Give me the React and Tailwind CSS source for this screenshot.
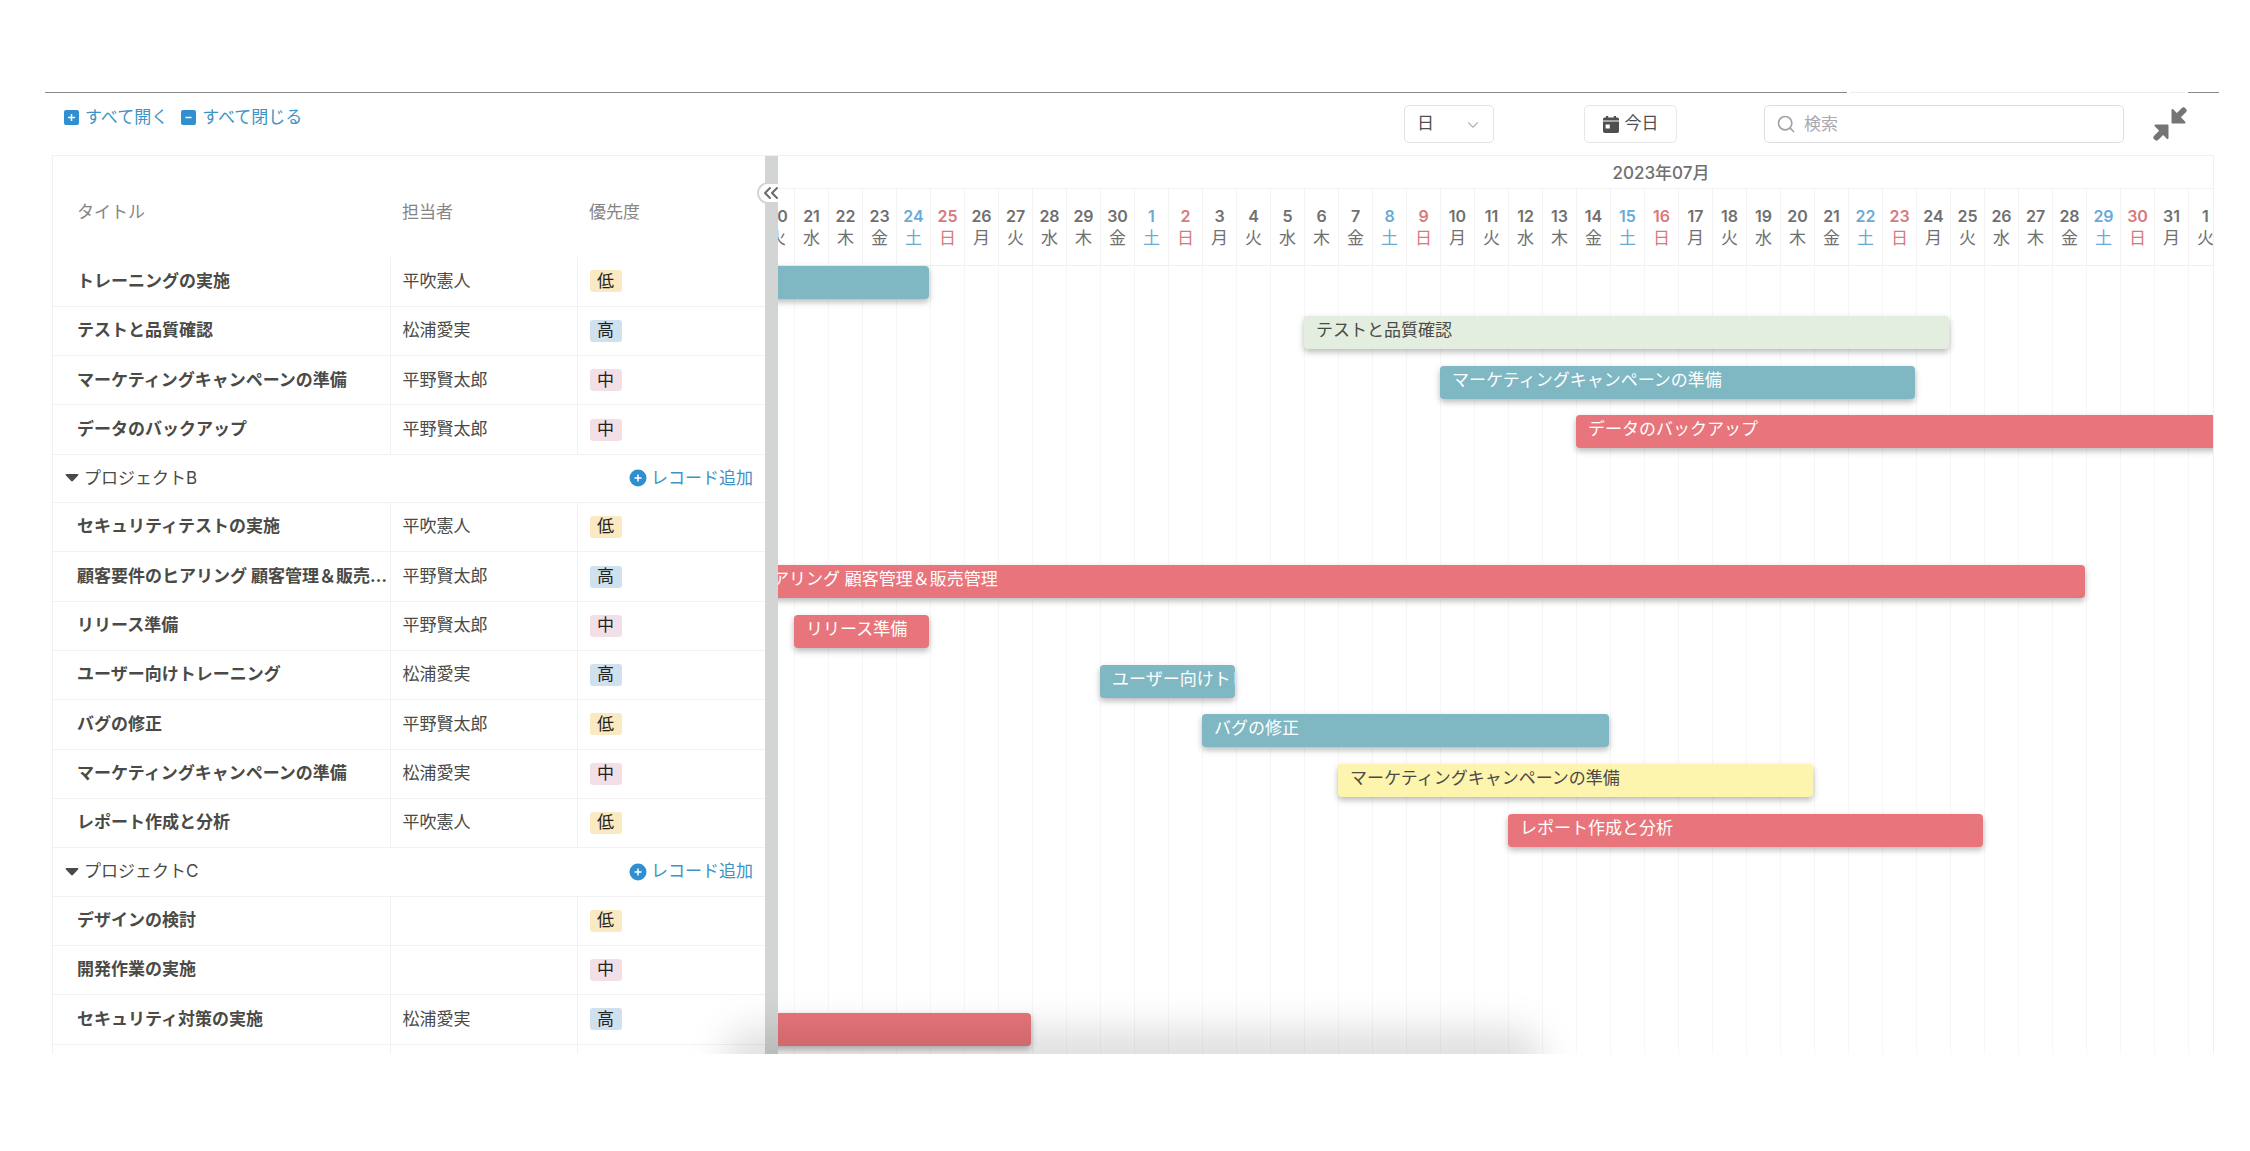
import { useState } from "react";
import { ChevronDown, ChevronsLeft, Search } from "lucide-react";

const rows = [
  { title: "トレーニングの実施", owner: "平吹憲人", priority: "低" },
  { title: "テストと品質確認", owner: "松浦愛実", priority: "高" },
  { title: "マーケティングキャンペーンの準備", owner: "平野賢太郎", priority: "中" },
  { title: "データのバックアップ", owner: "平野賢太郎", priority: "中" },
  { group: "プロジェクトB" },
  { title: "セキュリティテストの実施", owner: "平吹憲人", priority: "低" },
  { title: "顧客要件のヒアリング 顧客管理＆販売管理", owner: "平野賢太郎", priority: "高" },
  { title: "リリース準備", owner: "平野賢太郎", priority: "中" },
  { title: "ユーザー向けトレーニング", owner: "松浦愛実", priority: "高" },
  { title: "バグの修正", owner: "平野賢太郎", priority: "低" },
  { title: "マーケティングキャンペーンの準備", owner: "松浦愛実", priority: "中" },
  { title: "レポート作成と分析", owner: "平吹憲人", priority: "低" },
  { group: "プロジェクトC" },
  { title: "デザインの検討", owner: "", priority: "低" },
  { title: "開発作業の実施", owner: "", priority: "中" },
  { title: "セキュリティ対策の実施", owner: "松浦愛実", priority: "高" },
  { title: "", owner: "", priority: "" },
];

const badgeColors = {
  低: "bg-[#fbe9c2]",
  高: "bg-[#cfe1ee]",
  中: "bg-[#f3dfe8]",
};

const barColors = {
  teal: "bg-[#7fb7c3] text-white",
  red: "bg-[#e8757b] text-white",
  green: "bg-[#e3eee1] text-[#4a4a46]",
  yellow: "bg-[#fdf4ae] text-[#4a4a46]",
};

// start / end are day numbers counted from 6/17 (= 1), end is inclusive
const bars = [
  { row: 1, start: 1, end: 8, color: "teal", label: "" },
  { row: 2, start: 20, end: 38, color: "green", label: "テストと品質確認" },
  { row: 3, start: 24, end: 37, color: "teal", label: "マーケティングキャンペーンの準備" },
  { row: 4, start: 28, end: 46, color: "red", label: "データのバックアップ" },
  { row: 7, start: 1, end: 42, color: "red", label: "顧客要件のヒアリング 顧客管理＆販売管理" },
  { row: 8, start: 5, end: 8, color: "red", label: "リリース準備" },
  { row: 9, start: 14, end: 17, color: "teal", label: "ユーザー向けトレーニング" },
  { row: 10, start: 17, end: 28, color: "teal", label: "バグの修正" },
  { row: 11, start: 21, end: 34, color: "yellow", label: "マーケティングキャンペーンの準備" },
  { row: 12, start: 26, end: 39, color: "red", label: "レポート作成と分析" },
  { row: 16, start: 1, end: 11, color: "red", label: "" },
];

const weekdays = ["日", "月", "火", "水", "木", "金", "土"];

const days = Array.from({ length: 46 }, (_, i) => {
  const date = new Date(2023, 5, 17 + i);
  return { day: date.getDate(), weekday: date.getDay() };
});

function dayColor(weekday) {
  if (weekday === 6) return "text-[#6aabd6]";
  if (weekday === 0) return "text-[#d9797c]";
  return "text-[#707070]";
}

function CalendarIcon() {
  return (
    <svg width="16" height="17" viewBox="0 0 16 17" fill="currentColor" aria-hidden="true">
      <path d="M3 0h2.2v1.6h5.6V0H13v1.6h1.4A1.6 1.6 0 0 1 16 3.2v1.3H0V3.2a1.6 1.6 0 0 1 1.6-1.6H3z" />
      <path
        fillRule="evenodd"
        d="M0 5.6h16v9.6a1.8 1.8 0 0 1-1.8 1.8H1.8A1.8 1.8 0 0 1 0 15.200zM2.600 8.600v3.800h4.200V8.600z"
      />
    </svg>
  );
}

function CollapseIcon() {
  return (
    <svg
      width="34"
      height="34"
      viewBox="0 0 34 34"
      fill="currentColor"
      stroke="currentColor"
      strokeLinejoin="round"
      strokeLinecap="round"
      aria-hidden="true"
    >
      <path d="M19.500 3v12.500h12z" strokeWidth="2" />
      <path d="M23.500 10.500l7-7" strokeWidth="6" />
      <path d="M14.500 31V18.500h-12z" strokeWidth="2" />
      <path d="M10.500 23.500l-7 7" strokeWidth="6" />
    </svg>
  );
}

function SquareIcon({ minus }) {
  return (
    <svg width="15" height="15" viewBox="0 0 15 15" aria-hidden="true">
      <rect width="15" height="15" rx="2" fill="#2f8fd0" />
      <path
        d={minus ? "M4.500 7.500h6" : "M4 7.500h7M7.500 4v7"}
        stroke="#fff"
        strokeWidth="1.500"
      />
    </svg>
  );
}

function AddRecordButton() {
  return (
    <button type="button" className="flex items-center gap-1 text-[#3d93c6]">
      <svg width="18" height="18" viewBox="0 0 18 18" aria-hidden="true">
        <circle cx="9" cy="9" r="8.500" fill="#2f8fd0" />
        <path d="M5.500 9h7M9 5.500v7" stroke="#fff" strokeWidth="1.500" />
      </svg>
      レコード追加
    </button>
  );
}

function Toolbar() {
  const [scale, setScale] = useState("日");
  const [query, setQuery] = useState("");

  return (
    <div className="flex h-[62px] items-start justify-between pr-8 pl-[19px]">
      <div className="flex gap-[13px] pt-3 text-[#3d93c6]">
        <button type="button" className="flex items-center gap-[6px]">
          <SquareIcon />
          すべて開く
        </button>
        <button type="button" className="flex items-center gap-[6px]">
          <SquareIcon minus />
          すべて閉じる
        </button>
      </div>
      <div className="flex items-center pt-3 text-[#4f4f52]">
        <div className="relative mr-[90px]">
          <select
            aria-label="表示単位"
            value={scale}
            onChange={(e) => setScale(e.target.value)}
            className="h-[38px] w-[90px] appearance-none rounded-[5px] border border-[#e2e2e2] bg-white pl-3"
          >
            <option>日</option>
            <option>週</option>
            <option>月</option>
          </select>
          <ChevronDown
            size={18}
            strokeWidth={1.5}
            className="pointer-events-none absolute top-[11px] right-3 text-[#b3b3b8]"
          />
        </div>
        <button
          type="button"
          className="mr-[87px] flex h-[38px] w-[93px] items-center justify-center gap-[6px] rounded-[5px] border border-[#e6e6e6]"
        >
          <CalendarIcon />
          今日
        </button>
        <div className="relative mr-[29px]">
          <Search size={20} className="absolute top-[9px] left-3 text-[#a2a2a8]" />
          <input
            type="search"
            aria-label="検索"
            placeholder="検索"
            value={query}
            onChange={(e) => setQuery(e.target.value)}
            className="h-[38px] w-[360px] rounded-[5px] border border-[#dedede] pl-[39px] placeholder:text-[#a9a9ae]"
          />
        </div>
        <button type="button" aria-label="全画面を終了" className="text-[#757575]">
          <CollapseIcon />
        </button>
      </div>
    </div>
  );
}

function TaskTable() {
  return (
    <table className="h-[938px] w-full table-fixed border-collapse text-left text-[#4a4a46]">
      <colgroup>
        <col className="w-[337px]" />
        <col className="w-[187px]" />
        <col />
      </colgroup>
      <thead>
        <tr className="h-[101px] text-[#858585]">
          <th className="pt-3 pl-6 font-normal">タイトル</th>
          <th className="pt-3 pl-3 font-normal">担当者</th>
          <th className="pt-3 pl-3 font-normal">優先度</th>
        </tr>
      </thead>
      <tbody>
        {rows.map((row, i) =>
          row.group ? (
            <tr key={i} className="h-12 border-b border-[#f1f1f1]">
              <td colSpan={3} className="pr-3 pl-3">
                <div className="flex items-center justify-between">
                  <button type="button" className="flex items-center gap-[5px]">
                    <svg width="14" height="8" viewBox="0 0 15 9" fill="currentColor" aria-hidden="true">
                      <path d="M1.500 0h12q2 0 .8 1.600L8.500 8q-1 1-2 0L.7 1.600Q-.5 0 1.500 0z" />
                    </svg>
                    {row.group}
                  </button>
                  <AddRecordButton />
                </div>
              </td>
            </tr>
          ) : (
            <tr key={i} className="h-[49px] border-b border-[#f1f1f1]">
              <td className="truncate border-r border-[#f1f1f1] pl-6 font-bold">{row.title}</td>
              <td className="border-r border-[#f1f1f1] pl-3">{row.owner}</td>
              <td className="pl-3">
                {row.priority && (
                  <span
                    className={`flex h-[22px] w-8 items-center justify-center rounded-[3px] text-[#222] ${badgeColors[row.priority]}`}
                  >
                    {row.priority}
                  </span>
                )}
              </td>
            </tr>
          )
        )}
      </tbody>
    </table>
  );
}

function Timeline() {
  return (
    <div className="-ml-[120px] w-max">
      <div className="grid h-[33px] grid-cols-[repeat(46,34px)] items-center border-b border-[#f3f3f3] text-[#707070]">
        <div className="col-span-31 col-start-15 pt-[3px] text-center font-medium">2023年07月</div>
      </div>
      <div className="grid h-[77px] grid-cols-[repeat(46,34px)] border-b border-[#f0f0f0]">
        {days.map(({ day, weekday }, i) => (
          <div
            key={i}
            className={`border-l border-[#f3f3f3] pt-4 text-center leading-[22px] ${dayColor(weekday)}`}
          >
            <div className="text-base leading-[22px] font-semibold">{day}</div>
            <div>{weekdays[weekday]}</div>
          </div>
        ))}
      </div>
      <div className="grid h-[847px] grid-cols-[repeat(46,34px)] grid-rows-[repeat(17,1fr)]">
        {days.map((_, i) => (
          <div
            key={i}
            className="row-span-full border-l border-[#f7f7f7]"
            style={{ gridColumn: i + 1 }}
          />
        ))}
        {bars.map((bar) => (
          <div
            key={bar.row}
            className={`mr-px h-[33px] overflow-hidden rounded-[4px] pl-3 leading-7 whitespace-nowrap shadow-[0_3px_6px_rgba(0,0,0,0.28)] ${barColors[bar.color]}`}
            style={{ gridRow: bar.row, gridColumn: `${bar.start} / ${bar.end + 1}` }}
          >
            {bar.label}
          </div>
        ))}
      </div>
    </div>
  );
}

export default function App() {
  return (
    <div className="min-h-screen bg-white pt-[92px] pr-[31px] pl-[45px] font-['Inter','Noto_Sans_CJK_JP',sans-serif] text-[17px]">
      <div className="flex h-px gap-[3px]">
        <div className="flex-1 bg-[#888888]" />
        <div className="w-[335px] bg-[#ececec]" />
        <div className="w-[31px] bg-[#888888]" />
      </div>
      <Toolbar />
      <div className="relative mr-[5px] ml-[7px] flex h-[899px] overflow-hidden border-x border-t border-[#f0f0f0]">
        <div className="w-[712px] shrink-0">
          <TaskTable />
        </div>
        <div className="relative w-[13px] shrink-0 bg-[#d3d5d4]">
          <button
            type="button"
            aria-label="一覧を折りたたむ"
            className="absolute top-[26px] right-0 flex h-[22px] w-[21px] items-center justify-end overflow-hidden rounded-l-full border-2 border-r-0 border-[#d3d5d4] bg-white text-[#6b6b6b]"
          >
            <ChevronsLeft size={24} className="-mr-[5px] shrink-0" />
          </button>
        </div>
        <div className="min-w-0 flex-1 overflow-hidden">
          <Timeline />
        </div>
        <div className="pointer-events-none absolute -bottom-[38px] left-[670px] h-[64px] w-[820px] rounded-full bg-black/12 blur-[18px]" />
      </div>
    </div>
  );
}
